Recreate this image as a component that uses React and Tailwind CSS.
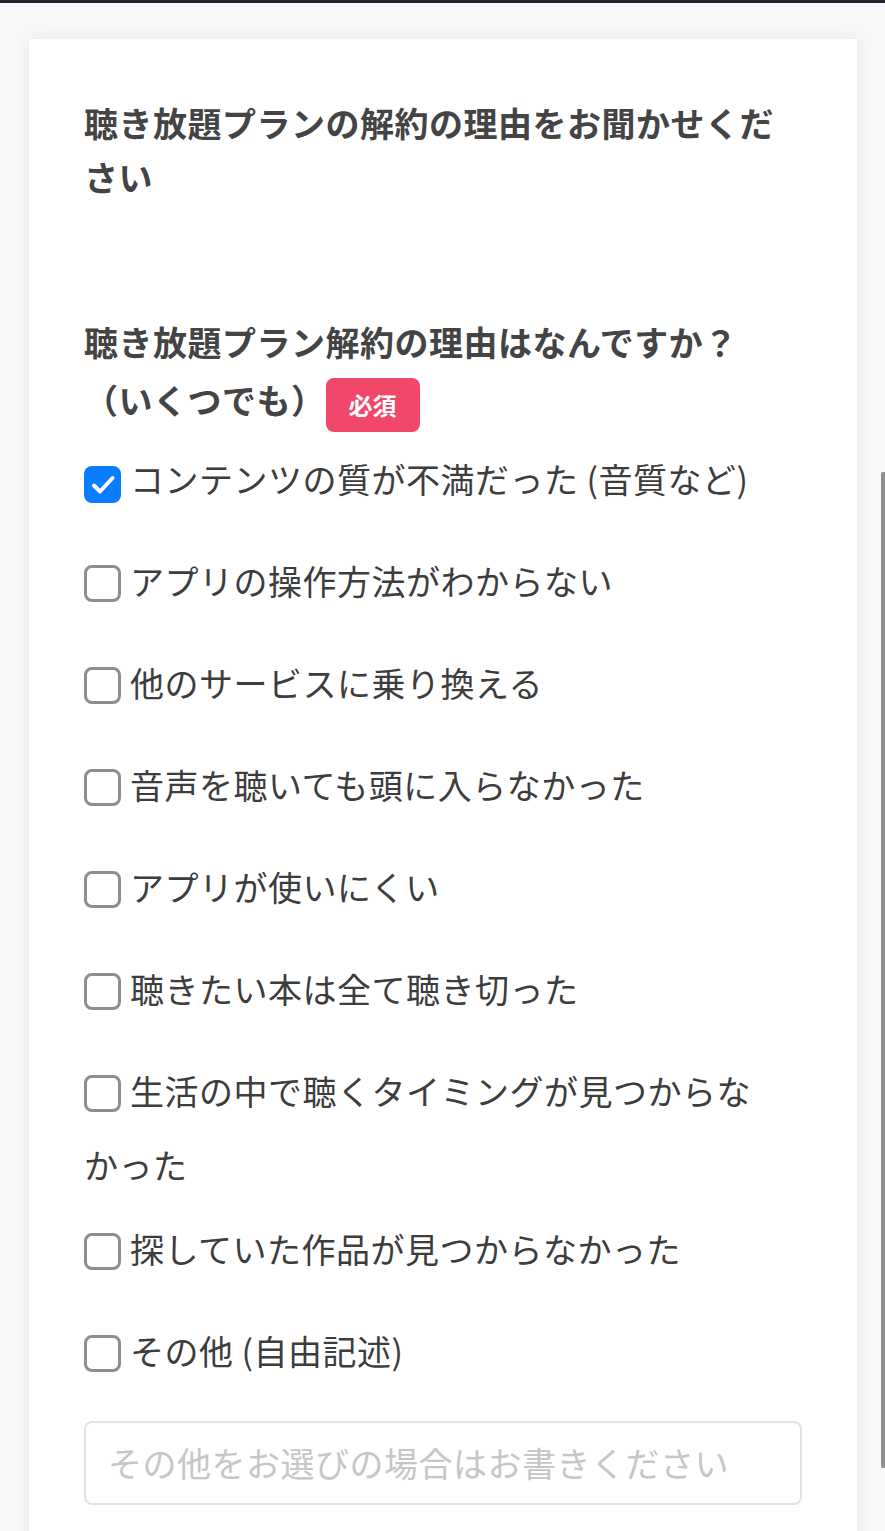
import React from "react";

const reasons = [
  { label: "コンテンツの質が不満だった (音質など)", checked: true },
  { label: "アプリの操作方法がわからない" },
  { label: "他のサービスに乗り換える" },
  { label: "音声を聴いても頭に入らなかった" },
  { label: "アプリが使いにくい" },
  { label: "聴きたい本は全て聴き切った" },
  { label: "生活の中で聴くタイミングが見つからな", tail: "かった" },
  { label: "探していた作品が見つからなかった" },
  { label: "その他 (自由記述)" },
];

function Box({ checked }) {
  if (checked) {
    return (
      <span className="inline-flex items-center justify-center w-[37px] h-[37px] rounded-[8px] bg-[#0a7cff] align-[-7px] mr-[9px]">
        <svg width="30" height="30" viewBox="0 0 30 30" fill="none">
          <path
            d="M6 15.5l6 6L24.5 8"
            stroke="white"
            strokeWidth="4"
            strokeLinecap="round"
            strokeLinejoin="round"
          />
        </svg>
      </span>
    );
  }
  return (
    <span className="inline-block w-[37px] h-[37px] rounded-[8px] border-[3px] border-[#8e8e8e] bg-white align-[-7px] mr-[9px]" />
  );
}

export default function App() {
  return (
    <div
      className="relative h-[1531px] overflow-hidden bg-[#f7f7f7]"
      style={{ fontFamily: '"Noto Sans CJK JP", "Noto Sans", sans-serif' }}
    >
      <div className="h-[3px] bg-[#1d2430]" />
      <div className="mt-[35px] ml-[28px] w-[830px] bg-white border border-[#f0f0f0] shadow-[0_0_14px_rgba(0,0,0,0.05)] px-[55px] pt-[57px] pb-10">
        <h1 className="text-[34px] leading-[54px] font-bold text-[#444] tracking-[0.5px]">
          聴き放題プランの解約の理由をお聞かせください
        </h1>

        <h2 className="mt-[109px] text-[34px] leading-[58px] font-bold text-[#444] tracking-[0.5px]">
          聴き放題プラン解約の理由はなんですか？（いくつでも）
          <span className="inline-flex items-center justify-center w-[94px] h-[54px] rounded-[8px] bg-[#f0476a] text-white text-[24px] font-bold align-middle tracking-normal">
            必須
          </span>
        </h2>

        <div className="mt-[10px]">
          {reasons.map((r) => (
            <label
              key={r.label}
              className={`block text-[34px] leading-[74px] text-[#3d3d3d] tracking-[0.5px] ${
                r.tail ? "mb-[10px]" : "mb-[28px]"
              }`}
            >
              <Box checked={r.checked} />
              {r.label}
              {r.tail && <span className="whitespace-nowrap">{r.tail}</span>}
            </label>
          ))}
        </div>

        <div className="mt-[33px] h-[84px] rounded-[8px] border-2 border-[#e2e2e2] flex items-center px-[22px] text-[34px] text-[#c6c6c6] tracking-[0.5px]">
          その他をお選びの場合はお書きください
        </div>
      </div>

      <div className="absolute right-0 top-[472px] w-[4px] h-[996px] rounded-l-[2px] bg-[#8f8f8f]" />
    </div>
  );
}
